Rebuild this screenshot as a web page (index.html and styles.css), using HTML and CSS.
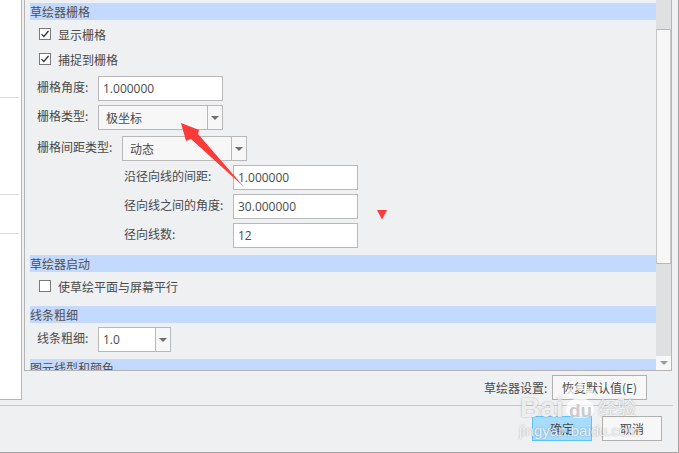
FILE: index.html
```html
<!DOCTYPE html>
<html lang="zh">
<head>
<meta charset="utf-8">
<title>草绘器设置</title>
<link rel="stylesheet" href="styles.css">
</head>
<body>
<div class="dialog">
  <div class="top">
    <aside class="side">
      <div class="side-row r1"></div>
      <div class="side-row r2"></div>
      <div class="side-row r3"></div>
    </aside>
    <div class="right">
      <div class="panel">
        <div class="scroller">
          <div class="head first">草绘器栅格</div>
          <label class="check c1"><span class="box on"><svg viewBox="0 0 12 12" width="10" height="10"><path class="tick" d="M1.8 6.2 4.6 9 10.2 2.4"/></svg></span>显示栅格</label>
          <label class="check c2"><span class="box on"><svg viewBox="0 0 12 12" width="10" height="10"><path class="tick" d="M1.8 6.2 4.6 9 10.2 2.4"/></svg></span>捕捉到栅格</label>
          <div class="field f1"><span class="lab w61">栅格角度:</span><div class="input w125">1.000000</div></div>
          <div class="field f2"><span class="lab w61">栅格类型:</span><div class="select w125"><span class="val cn">极坐标</span><span class="drop"><i class="tri"></i></span></div></div>
          <div class="field f3"><span class="lab w85">栅格间距类型:</span><div class="select w125"><span class="val cn">动态</span><span class="drop"><i class="tri"></i></span></div></div>
          <div class="field f4"><span class="lab w109">沿径向线的间距:</span><div class="input w125">1.000000</div></div>
          <div class="field f5"><span class="lab w109">径向线之间的角度:</span><div class="input w125">30.000000</div></div>
          <div class="field f5"><span class="lab w109">径向线数:</span><div class="input w125">12</div></div>
          <div class="head h2">草绘器启动</div>
          <label class="check c3"><span class="box"></span>使草绘平面与屏幕平行</label>
          <div class="head h3">线条粗细</div>
          <div class="field f6"><span class="lab w61">线条粗细:</span><div class="select w73 white"><span class="val">1.0</span><span class="drop"><i class="tri"></i></span></div></div>
          <div class="head h4">图元线型和颜色</div>
        </div>
        <div class="scrollbar">
          <div class="track-top"></div>
          <div class="thumb"></div>
          <div class="track-bottom"></div>
          <div class="arrow-btn"><i class="tri small"></i></div>
        </div>
      </div>
      <div class="settings">
        <span class="settings-label">草绘器设置:</span>
        <button class="btn restore">恢复默认值(E)</button>
      </div>
    </div>
  </div>
  <div class="actions">
    <button class="btn ok">确定</button>
    <button class="btn cancel">取消</button>
  </div>
</div>

<svg class="annot" width="679" height="453" viewBox="0 0 679 453">
  <path d="M181 123 199 130 198 134 244 187 191 139 186 141Z" fill="#fb3a3a"/>
  <path d="M377 210H387L382 219.500Z" fill="#fb3a3a"/>
</svg>

<div class="wm">
  <span class="wm-bai">Bai</span>
  <svg class="wm-paw" width="34" height="38" viewBox="0 0 34 38">
    <ellipse cx="7" cy="11" rx="3.500" ry="5"/>
    <ellipse cx="17" cy="5" rx="3.500" ry="5"/>
    <ellipse cx="27" cy="11" rx="3.500" ry="5"/>
    <path d="M3 27C3 20 10 16 17 16S31 20 31 27C31 33 27 36 17 36S3 33 3 27Z"/>
  </svg>
  <span class="wm-du">du</span>
  <span class="wm-jy">经验</span>
  <span class="wm-url">jingyan.baidu.com</span>
</div>
</body>
</html>
```
FILE: styles.css
```css
* { box-sizing: border-box; }
html, body { margin: 0; padding: 0; }
body {
  width: 679px;
  height: 453px;
  overflow: hidden;
  position: relative;
  background: #eef0f2;
  color: #4a4a4a;
  font: 12px/16px "Noto Sans CJK SC", "Open Sans", sans-serif;
}
.dialog {
  width: 679px;
  height: 453px;
  border-right: 1px solid #a3a3a3;
  border-bottom: 1px solid #a3a3a3;
}
.top {
  display: flex;
  width: 673px;
  height: 406px;
  border-bottom: 1px solid #c8c8c8;
}
.side {
  width: 22px;
  height: 400px;
  margin-right: 2px;
  background: #fff;
  border-right: 1px solid #b5b5b5;
  border-bottom: 1px solid #b5b5b5;
}
.side-row { width: 19px; border-bottom: 1px solid #dcdcdc; }
.r1 { height: 98px; }
.r2 { height: 97px; }
.r3 { height: 39px; }
.right { width: 648px; }
.panel {
  display: flex;
  height: 371px;
  border-left: 1px solid #b5b5b5;
  border-right: 1px solid #b5b5b5;
  border-bottom: 1px solid #b5b5b5;
}
.scroller {
  width: 631px;
  height: 370px;
  padding: 3px 0 0 5px;
  overflow: hidden;
}
.head {
  height: 17px;
  padding-top: 1px;
  background: #c3d9fe;
  line-height: 16px;
  color: #505050;
}
.h2 { margin-top: 7px; }
.h3 { margin-top: 14px; }
.h4 { margin-top: 7px; }
.check {
  display: flex;
  align-items: flex-start;
  height: 12px;
  margin-left: 9px;
  line-height: 14px;
  white-space: nowrap;
}
.c1 { margin-top: 8px; }
.c2 { margin-top: 13px; }
.c3 { margin-top: 8px; }
.box {
  display: flex;
  align-items: center;
  justify-content: center;
  width: 12px;
  height: 12px;
  margin-right: 7px;
  background: #fff;
  border: 1px solid #7a7a7a;
}
.tick { fill: none; stroke: #333; stroke-width: 1.500; }
.field { display: flex; height: 25px; }
.f1 { margin-top: 11px; margin-left: 7px; }
.f2 { margin-top: 4px; margin-left: 7px; }
.f3 { margin-top: 6px; margin-left: 7px; }
.f4 { margin-top: 4px; margin-left: 94px; }
.f5 { margin-top: 4px; margin-left: 94px; }
.f6 { margin-top: 4px; margin-left: 7px; }
.lab { padding-top: 3px; white-space: nowrap; }
.w61 { width: 61px; }
.w85 { width: 85px; }
.w109 { width: 109px; }
.input, .select {
  border: 1px solid #b8b8b8;
  font-family: "Open Sans", "Noto Sans CJK SC", sans-serif;
  font-size: 12px;
  line-height: 23px;
  color: #4a4a4a;
}
.input { background: #fff; padding-left: 4px; }
.w125 { width: 125px; }
.w73 { width: 73px; }
.select { display: flex; background: #f7f7f7; }
.select.white { background: #fff; }
.val { flex: 1; padding-left: 4px; }
.val.cn { padding-left: 7px; font-family: "Noto Sans CJK SC", sans-serif; font-size: 12px; }
.drop {
  display: flex;
  align-items: center;
  justify-content: center;
  width: 15px;
  background: #f7f7f7;
  border-left: 1px solid #b8b8b8;
}
.tri {
  display: block;
  width: 0;
  height: 0;
  border-left: 4px solid transparent;
  border-right: 4px solid transparent;
  border-top: 4px solid #6e6e6e;
}
.tri.small { border-top-color: #9a9a9a; }
.scrollbar { width: 15px; height: 370px; display: flex; flex-direction: column; background: #dfe0e2; }
.track-top { height: 29px; }
.thumb {
  height: 235px;
  background: #f7f7f7;
  border-top: 1px solid #b8b8b8;
  border-bottom: 1px solid #b8b8b8;
  border-left: 1px solid #c8c8c8;
  border-right: 1px solid #c8c8c8;
}
.track-bottom { height: 92px; }
.arrow-btn {
  height: 14px;
  display: flex;
  align-items: center;
  justify-content: center;
  background: #f7f7f7;
}
.settings {
  display: flex;
  align-items: center;
  height: 25px;
  margin-top: 4px;
  padding-left: 460px;
}
.settings-label { width: 68px; white-space: nowrap; }
.btn {
  height: 25px;
  padding: 0;
  background: #f7f7f7;
  border: 1px solid #b0b0b0;
  color: #4a4a4a;
  font: 12px/16px "Noto Sans CJK SC", sans-serif;
}
.restore { width: 95px; }
.actions {
  display: flex;
  gap: 10px;
  padding: 10px 0 0 532px;
}
.ok, .cancel { width: 60px; }
.ok { background: #a5dcff; border-color: #5ec3fb; }
.annot { position: absolute; left: 0; top: 0; pointer-events: none; }
.wm { position: absolute; left: 0; top: 0; color: rgba(255,255,255,0.82); font-family: "Liberation Sans", sans-serif; text-shadow: 0 0 1.500px rgba(90,90,90,0.55); }
.wm span { position: absolute; white-space: nowrap; }
.wm-bai { left: 520px; top: 392px; font: bold 28px/32px "Liberation Sans", sans-serif; }
.wm-paw { position: absolute; left: 563px; top: 382px; fill: rgba(255,255,255,0.72); }
.wm-du { left: 569px; top: 400px; font: bold 19px/22px "Liberation Sans", sans-serif; color: rgba(200,200,200,0.95); text-shadow: none; }
.wm-jy { left: 598px; top: 394px; font: 19px/26px "Noto Sans CJK SC", sans-serif; }
.wm-url { left: 519px; top: 422px; font: 15px/18px "Liberation Sans", sans-serif; }
```
